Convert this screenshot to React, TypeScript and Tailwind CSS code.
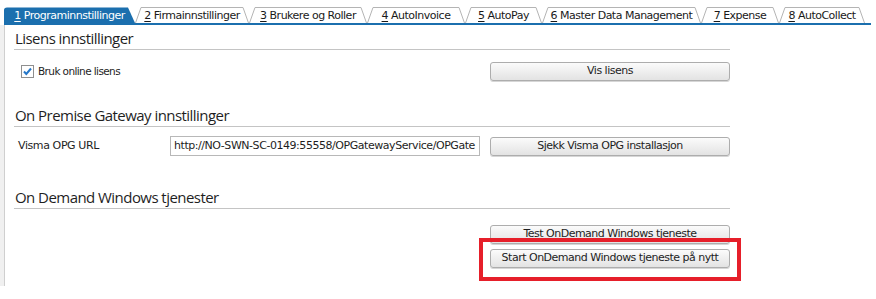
import React from "react";

const tahoma = { fontFamily: '"DejaVu Sans", sans-serif' };

type Tab = { n: string; label: string; w: number };
const tabs: Tab[] = [
  { n: "1", label: "Programinnstillinger", w: 131 },
  { n: "2", label: "Firmainnstillinger", w: 114 },
  { n: "3", label: "Brukere og Roller", w: 118 },
  { n: "4", label: "AutoInvoice", w: 98 },
  { n: "5", label: "AutoPay", w: 77 },
  { n: "6", label: "Master Data Management", w: 159 },
  { n: "7", label: "Expense", w: 78 },
  { n: "8", label: "AutoCollect", w: 86 },
];

function TabItem({ t, active }: { t: Tab; active: boolean }) {
  const h = 16;
  const w = t.w;
  return (
    <div className="relative h-[16px] pt-[2px] flex items-center justify-center shrink-0" style={{ width: w }}>
      <svg className="absolute inset-0" width={w} height={h} viewBox={`0 0 ${w} ${h}`}>
        {active ? (
          <path d={`M0 ${h} L0 3 Q0 0.5 3 0.5 L${w - 7} 0.5 L${w} ${h} Z`} fill="#1b6fae" />
        ) : (
          <path
            d={`M0.5 ${h} L6 0.5 L${w - 6} 0.5 L${w - 0.5} ${h}`}
            fill="#ffffff"
            stroke="#b4b4b4"
            strokeWidth="1"
          />
        )}
      </svg>
      <span
        className={`relative text-[11px] leading-[14px] tracking-[-0.5px] whitespace-nowrap ${active ? "text-white" : "text-[#1a1a1a]"}`}
        style={tahoma}
      >
        <span className="underline underline-offset-2">{t.n}</span> {t.label}
      </span>
    </div>
  );
}

function Btn({ children }: { children: React.ReactNode }) {
  return (
    <div
      className="w-[240px] h-[19px] rounded-[3px] border border-[#adadad] bg-gradient-to-b from-[#fbfbfb] to-[#e3e3e3] shadow-[0_1px_0_#d6d6d6] flex items-center justify-center text-[11px] tracking-[-0.5px] text-[#1e1e1e] whitespace-nowrap"
      style={tahoma}
    >
      {children}
    </div>
  );
}

function Heading({ children }: { children: React.ReactNode }) {
  return (
    <div
      className="h-[22px] border-b border-[#c4c4c4] pl-[1px] text-[15px] leading-[21px] tracking-[-0.55px] text-[#1f1f1f]"
      style={{ fontFamily: '"Open Sans", sans-serif' }}
    >
      {children}
    </div>
  );
}

export default function App() {
  return (
    <div className="relative w-[876px] h-[299px] bg-white overflow-hidden">
      {/* Tab bar */}
      <div className="h-[25px] pl-[4px] flex">
        <div className="w-[867px] h-[25px] flex items-end border-b-2 border-[#1b6fae]">
          {tabs.map((t, i) => (
            <TabItem key={t.n} t={t} active={i === 0} />
          ))}
        </div>
      </div>

      {/* Body */}
      <div className="flex h-[261px]">
        <div className="w-[5px] bg-[#f0f0f0] border-r border-[#cfcfcf]" />
        <div className="ml-[9px] w-[716px] flex flex-col">
          <div className="mt-[3px]">
            <Heading>Lisens innstillinger</Heading>
          </div>
          <div className="mt-[12px] flex items-center justify-between">
            <div className="ml-[7px] flex items-center gap-[4px]">
              <div className="w-[13px] h-[13px] border border-[#8f8f8f] bg-white flex items-center justify-center">
                <svg width="11" height="11" viewBox="0 0 11 11">
                  <path d="M2 5.5 L4.3 8 L9 2.5" fill="none" stroke="#2678c9" strokeWidth="2" />
                </svg>
              </div>
              <span className="text-[10.5px] tracking-[-0.6px] text-[#1e1e1e]" style={tahoma}>
                Bruk online lisens
              </span>
            </div>
            <Btn>Vis lisens</Btn>
          </div>

          <div className="mt-[24px]">
            <Heading>On Premise Gateway innstillinger</Heading>
          </div>
          <div className="mt-[9px] flex items-center">
            <span className="w-[156px] pl-[4px] text-[11px] tracking-[-0.4px] text-[#1e1e1e]" style={tahoma}>
              Visma OPG URL
            </span>
            <div
              className="w-[310px] h-[20px] border border-[#b8b8b8] bg-white overflow-hidden whitespace-nowrap pl-[3px] text-[11px] leading-[18px] tracking-[-0.45px] text-[#1e1e1e]"
              style={tahoma}
            >
              http://NO-SWN-SC-0149:55558/OPGatewayService/OPGate
            </div>
            <div className="ml-[10px]">
              <Btn>Sjekk Visma OPG installasjon</Btn>
            </div>
          </div>

          <div className="mt-[31px]">
            <Heading>On Demand Windows tjenester</Heading>
          </div>
          <div className="mt-[16px] flex flex-col items-end gap-[5px]">
            <Btn>Test OnDemand Windows tjeneste</Btn>
            <Btn>Start OnDemand Windows tjeneste på nytt</Btn>
          </div>
        </div>
      </div>

      {/* Red highlight overlay */}
      <div className="absolute left-[479px] top-[238px] w-[262px] h-[43px] border-[4px] border-[#e61f2a]" />
    </div>
  );
}
